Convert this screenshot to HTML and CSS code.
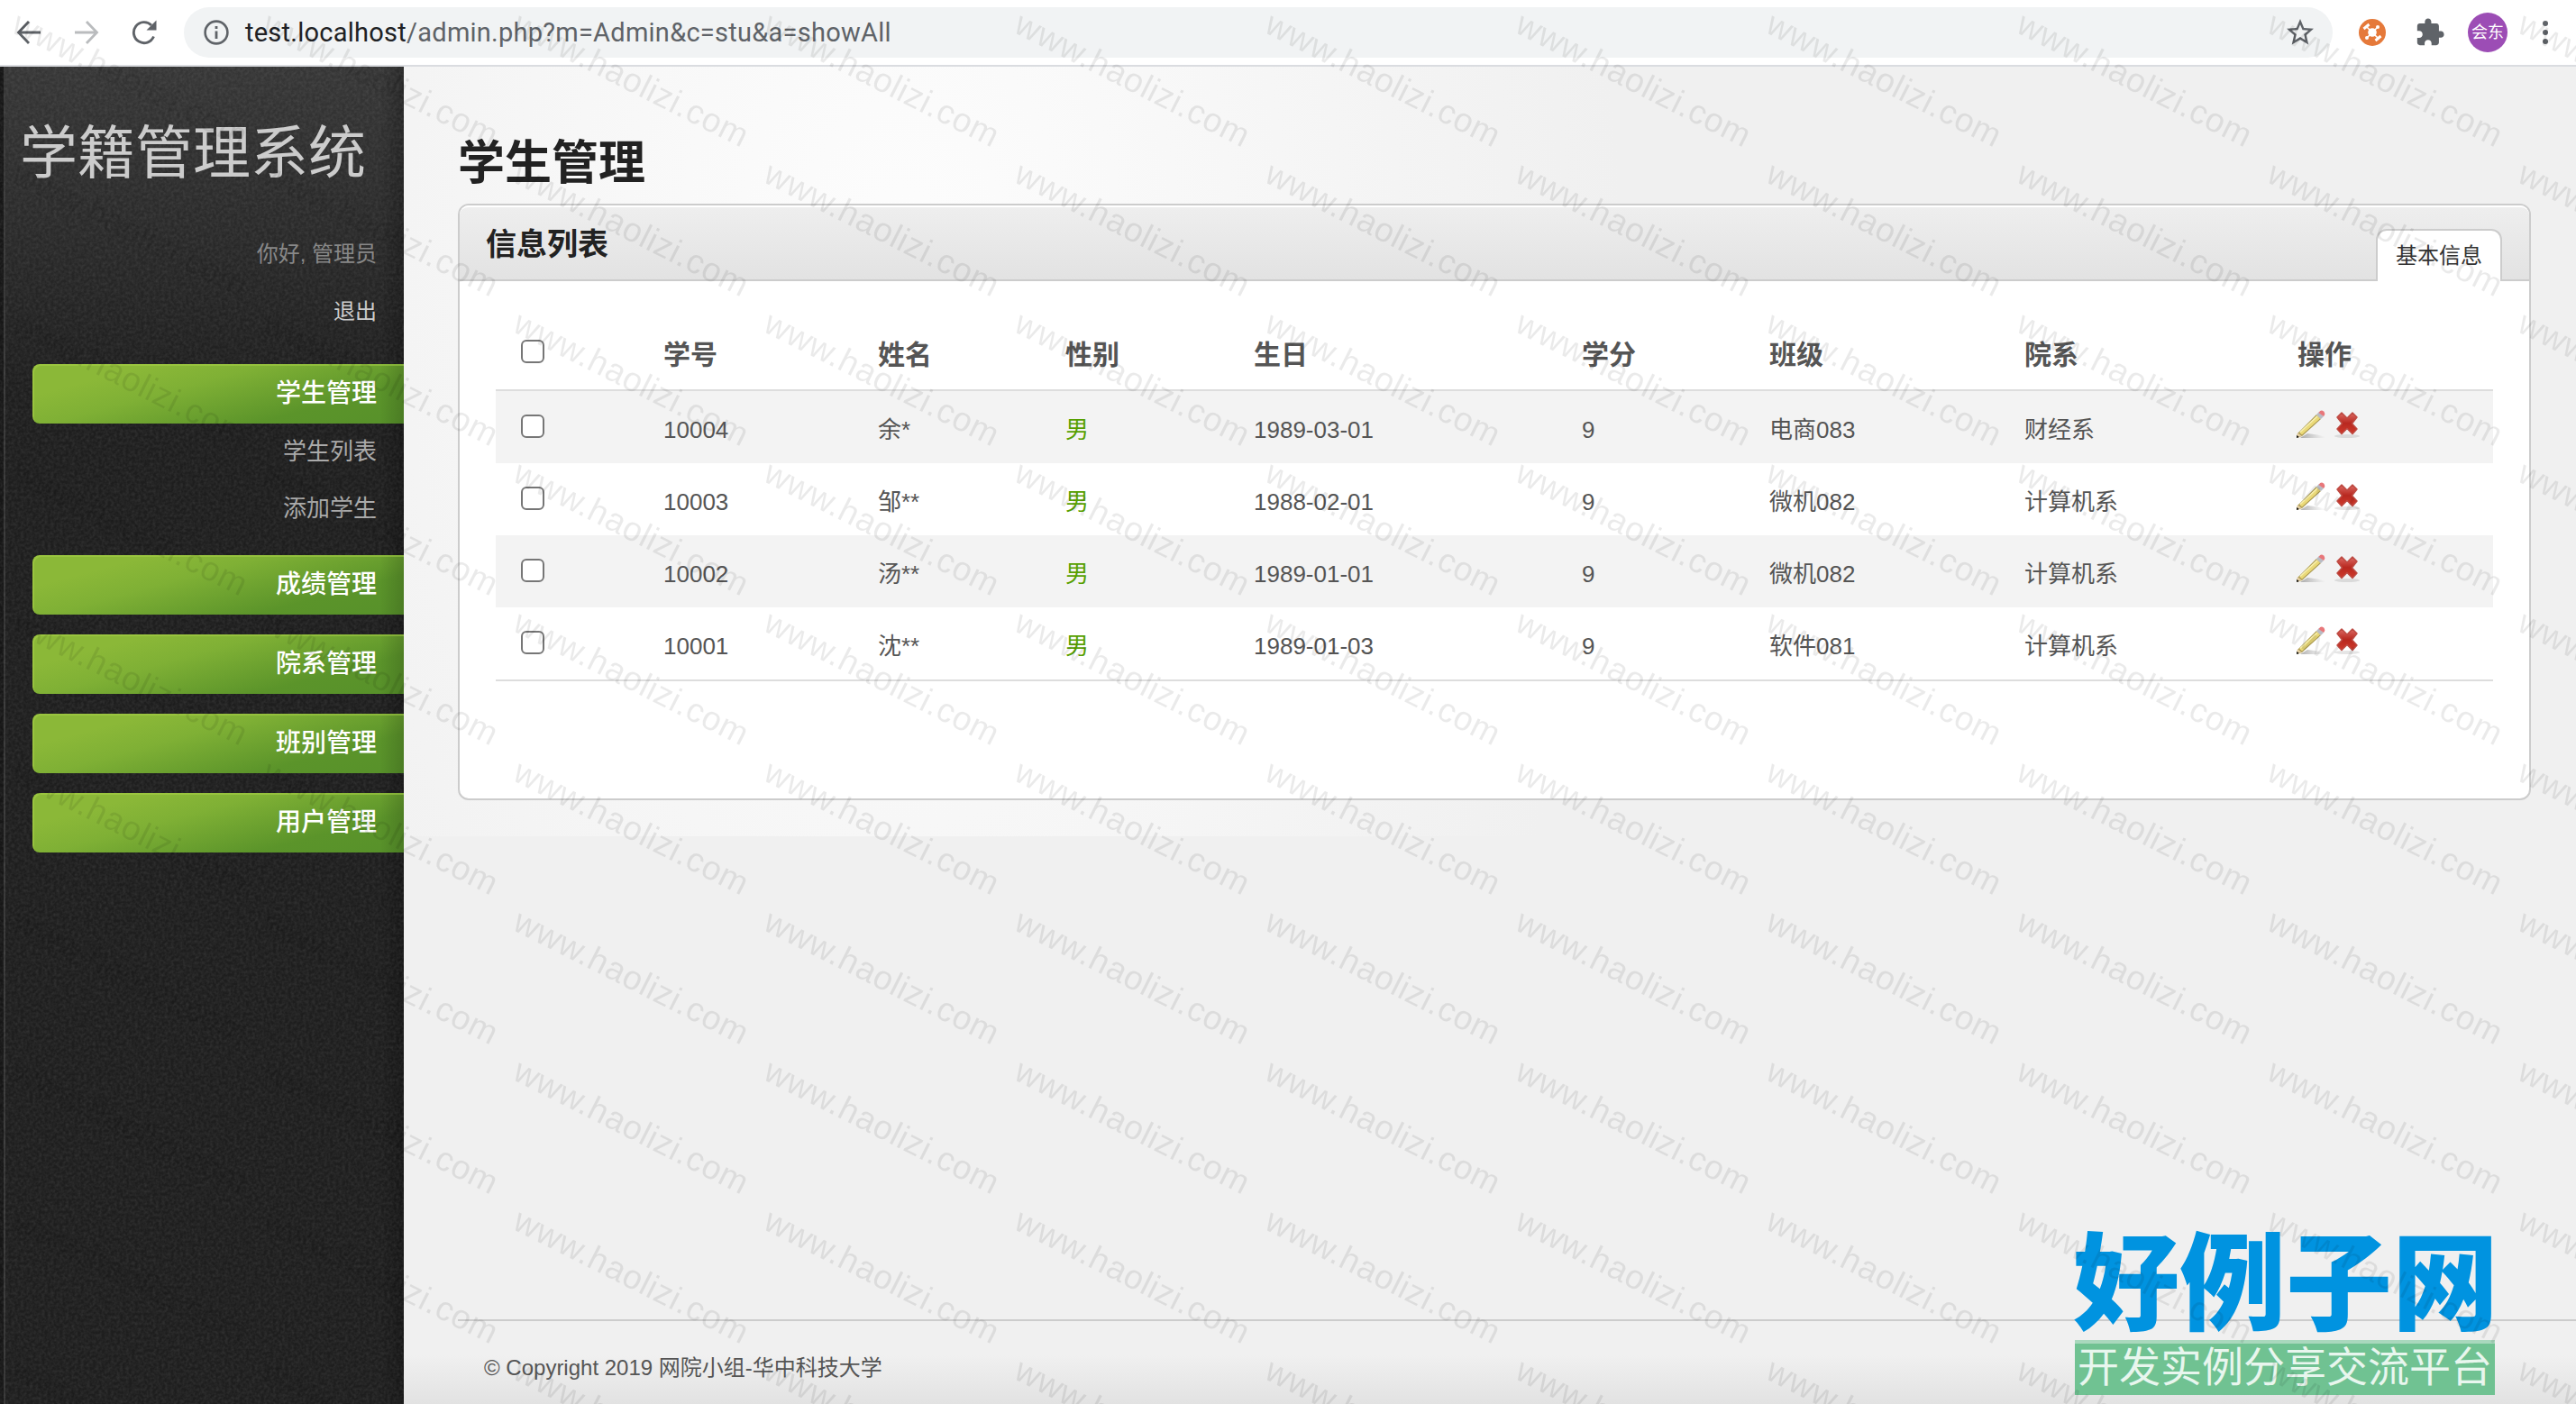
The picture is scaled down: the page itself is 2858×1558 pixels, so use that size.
FILE: index.html
```html
<!DOCTYPE html>
<html lang="zh-CN">
<head>
    <meta charset="UTF-8">
    <title>学籍管理系统</title>
    <link rel="stylesheet" href="styles.css">
</head>
<body>
    <svg class="defs" width="0" height="0">
        <defs>
            <linearGradient id="red" x1="0" y1="0" x2="0" y2="1">
                <stop offset="0" stop-color="#dc6a64"/>
                <stop offset="0.5" stop-color="#b8281f"/>
                <stop offset="1" stop-color="#cf3a2c"/>
            </linearGradient>
            <linearGradient id="lead" x1="0" y1="0" x2="1" y2="0">
                <stop offset="0" stop-color="#777" stop-opacity="0.6"/>
                <stop offset="1" stop-color="#999" stop-opacity="0"/>
            </linearGradient>
        </defs>
        <symbol id="pencil" viewBox="0 0 32 32">
            <path d="M4 32L12 27Q24 28 32 31L32 32Z" fill="url(#lead)"/>
            <path d="M1 27L22 6L27 11L6 30L0 32Z" fill="#a89750"/>
            <path d="M3 26L22.500 7L26 10.500L6 28.500Z" fill="#ead978"/>
            <path d="M4 25.500L23 8" stroke="#f7efb0" stroke-width="1.500"/>
            <path d="M1 26L6 30L0 32Z" fill="#e3cda0"/>
            <path d="M0 29L3 31L0 32Z" fill="#111"/>
            <path d="M22 6L25 3L30 8L27 11Z" fill="#b9bcc4"/>
            <path d="M24.500 4Q27 0 30 2.500Q32.500 5 30 8Z" fill="#e8777a"/>
        </symbol>
        <symbol id="cross" viewBox="0 0 32 32">
            <ellipse cx="16" cy="30" rx="14" ry="2" fill="#000" opacity="0.1"/>
            <path d="M5 9L10 4L16 10L22 4L27 9L21.500 16L27 22L22 27.500L16 21.500L10 27.500L5 22L10.500 16Z" fill="url(#red)" stroke="#bd4a42" stroke-width="1.500" stroke-linejoin="round"/>
        </symbol>
    </svg>

    <div class="toolbar">
        <div class="nav-icons">
            <svg width="28" height="28" viewBox="0 0 28 28" fill="none" stroke="#5f6368" stroke-width="2.800"><path d="M27 14H3M14 2L2.500 14L14 26"/></svg>
            <svg width="28" height="28" viewBox="0 0 28 28" fill="none" stroke="#babcbe" stroke-width="2.800"><path d="M1 14H25M14 2L25.500 14L14 26"/></svg>
            <svg width="28" height="28" viewBox="0 0 28 28"><path d="M24.500 18.500A11.500 11.500 0 1 1 22 6" fill="none" stroke="#5f6368" stroke-width="2.900"/><path d="M27.500 0.500V11.500H16.500Z" fill="#5f6368"/></svg>
        </div>
        <div class="address">
            <svg width="28" height="28" viewBox="0 0 28 28"><circle cx="14" cy="14" r="12.400" fill="none" stroke="#5f6368" stroke-width="2.600"/><path d="M12.600 7H15.400V10H12.600ZM12.600 12.500H15.400V21H12.600Z" fill="#5f6368"/></svg>
            <div class="url">test.localhost<span>/admin.php?m=Admin&amp;c=stu&amp;a=showAll</span></div>
            <svg class="star" width="36" height="36" viewBox="0 0 24 24" fill="#5f6368"><path d="M22 9.240l-7.190-.62L12 2 9.190 8.630 2 9.240l5.460 4.730L5.820 21 12 17.270 18.180 21l-1.630-7.030L22 9.240zM12 15.400l-3.760 2.270 1-4.280-3.320-2.880 4.380-.38L12 6.100l1.710 4.040 4.380.38-3.320 2.880 1 4.280L12 15.400z"/></svg>
        </div>
        <div class="extensions">
            <svg width="30" height="30" viewBox="0 0 30 30"><circle cx="15" cy="15" r="15" fill="#e5793a"/><g stroke="#fff" stroke-width="1.600"><path d="M9 9L21 21M21 9L9 21"/><path d="M5.500 11L11.500 6M18.500 24L24.500 19" stroke-width="3"/></g><circle cx="15" cy="15" r="4.800" fill="#fff"/><circle cx="21" cy="9" r="2" fill="#fff"/><circle cx="9" cy="21" r="2" fill="#fff"/></svg>
            <svg width="34" height="34" viewBox="0 0 24 24" fill="#5f6368"><path d="M20.500 11H19V7c0-1.100-.9-2-2-2h-4V3.500C13 2.120 11.880 1 10.500 1S8 2.120 8 3.500V5H4c-1.100 0-1.990.9-1.990 2v3.800H3.500c1.490 0 2.700 1.210 2.700 2.700s-1.210 2.700-2.700 2.700H2V20c0 1.100.9 2 2 2h3.800v-1.500c0-1.490 1.210-2.700 2.700-2.700 1.490 0 2.700 1.210 2.700 2.700V22H17c1.100 0 2-.9 2-2v-4h1.500c1.380 0 2.500-1.120 2.500-2.500S21.880 11 20.500 11z"/></svg>
            <div class="avatar">会东</div>
            <svg width="6" height="28" viewBox="0 0 6 28" fill="#5f6368"><circle cx="3" cy="4" r="3"/><circle cx="3" cy="14" r="3"/><circle cx="3" cy="24" r="3"/></svg>
        </div>
    </div>

    <div class="wrapper">
        <div class="sidebar">
            <svg class="grain" width="448" height="1484">
                <filter id="noise" x="0" y="0" width="100%" height="100%">
                    <feTurbulence type="fractalNoise" baseFrequency="0.3" numOctaves="2" seed="4"/>
                    <feColorMatrix values="0 0 0 0 1  0 0 0 0 1  0 0 0 0 1  0.140 0 0 0 -0.045"/>
                </filter>
                <rect width="448" height="1484" filter="url(#noise)"/>
            </svg>
            <h1>学籍管理系统</h1>
            <p class="hello">你好, 管理员</p>
            <p class="logout">退出</p>
            <ul class="menu">
                <li>
                    <a class="nav-item">学生管理</a>
                    <ul class="submenu">
                        <li>学生列表</li>
                        <li>添加学生</li>
                    </ul>
                </li>
                <li><a class="nav-item">成绩管理</a></li>
                <li><a class="nav-item">院系管理</a></li>
                <li><a class="nav-item">班别管理</a></li>
                <li><a class="nav-item">用户管理</a></li>
            </ul>
        </div>

        <div class="main">
            <h2>学生管理</h2>
            <div class="content-box">
                <div class="box-header">
                    <h3>信息列表</h3>
                    <div class="tab">基本信息</div>
                </div>
                <div class="box-content">
                    <table>
                        <colgroup>
                            <col class="c-check"><col class="c-id"><col class="c-name"><col class="c-sex"><col class="c-birth"><col class="c-score"><col class="c-class"><col class="c-dept"><col class="c-action">
                        </colgroup>
                        <thead>
                            <tr><th><i class="check"></i></th><th>学号</th><th>姓名</th><th>性别</th><th>生日</th><th>学分</th><th>班级</th><th>院系</th><th>操作</th></tr>
                        </thead>
                        <tbody>
                            <tr><td><i class="check"></i></td><td>10004</td><td>余*</td><td class="sex">男</td><td>1989-03-01</td><td>9</td><td>电商083</td><td>财经系</td><td class="actions"><svg><use href="#pencil"/></svg><svg><use href="#cross"/></svg></td></tr>
                            <tr><td><i class="check"></i></td><td>10003</td><td>邹**</td><td class="sex">男</td><td>1988-02-01</td><td>9</td><td>微机082</td><td>计算机系</td><td class="actions"><svg><use href="#pencil"/></svg><svg><use href="#cross"/></svg></td></tr>
                            <tr><td><i class="check"></i></td><td>10002</td><td>汤**</td><td class="sex">男</td><td>1989-01-01</td><td>9</td><td>微机082</td><td>计算机系</td><td class="actions"><svg><use href="#pencil"/></svg><svg><use href="#cross"/></svg></td></tr>
                            <tr><td><i class="check"></i></td><td>10001</td><td>沈**</td><td class="sex">男</td><td>1989-01-03</td><td>9</td><td>软件081</td><td>计算机系</td><td class="actions"><svg><use href="#pencil"/></svg><svg><use href="#cross"/></svg></td></tr>
                        </tbody>
                    </table>
                </div>
            </div>
            <div class="footer">© Copyright 2019 网院小组-华中科技大学</div>
        </div>
    </div>

    <div class="site-logo">
        <div class="site-name">好例子网</div>
        <div class="site-slogan">开发实例分享交流平台</div>
    </div>

    <svg class="watermark" width="2858" height="1558">
        <defs>
            <pattern id="mark" x="0" y="4" width="278" height="166" patternUnits="userSpaceOnUse">
                <text transform="translate(11 31) rotate(26.800)" textLength="286" font-size="37.500">www.haolizi.com</text>
            </pattern>
        </defs>
        <rect width="2858" height="1558" fill="url(#mark)"/>
    </svg>
</body>
</html>
```

FILE: styles.css
```css
* {
    box-sizing: border-box;
    margin: 0;
    padding: 0;
}
body {
    position: relative;
    width: 2858px;
    height: 1558px;
    overflow: hidden;
    font-family: "Liberation Sans", "Noto Sans CJK SC", sans-serif;
    color: #555;
    background: #f0f0f0;
}
ul {
    list-style: none;
}
svg {
    display: block;
    flex-shrink: 0;
}
.defs {
    position: absolute;
}

/* browser bar */
.toolbar {
    display: flex;
    align-items: center;
    height: 74px;
    background: #fff;
    border-bottom: 2px solid #dadce0;
}
.nav-icons {
    display: flex;
    gap: 36px;
    width: 204px;
    padding-left: 18px;
}
.address {
    display: flex;
    align-items: center;
    width: 2384px;
    height: 56px;
    padding: 0 18px 0 22px;
    border-radius: 28px;
    background: #f1f3f4;
}
.url {
    flex: 1;
    margin-left: 18px;
    font-family: Roboto, sans-serif;
    font-size: 29px;
    letter-spacing: 0.25px;
    color: #202124;
}
.url span {
    color: #5f6368;
}
.extensions {
    display: flex;
    align-items: center;
    padding-left: 29px;
}
.extensions svg:nth-child(2) {
    margin-left: 32px;
}
.avatar {
    width: 44px;
    height: 44px;
    margin: 0 39px 0 25px;
    border-radius: 50%;
    background: #9c4db5;
    color: #fff;
    font-size: 18px;
    line-height: 44px;
    text-align: center;
}

.wrapper {
    display: flex;
    height: 1484px;
}

/* sidebar */
.sidebar {
    position: relative;
    width: 448px;
    text-align: right;
    background: linear-gradient(90deg, #161616 4px, #363636 4px, #363636 6px, transparent 6px, transparent 422px, rgba(0, 0, 0, 0.25)),
    linear-gradient(#363636, #1e1e1e 360px);
}
.sidebar > * {
    position: relative;
}
.sidebar .grain {
    position: absolute;
    top: 0;
    left: 0;
}
.sidebar h1 {
    margin-top: 48px;
    padding-left: 22px;
    font-size: 64px;
    font-weight: 400;
    line-height: 96px;
    text-align: left;
    color: #ccc;
}
.hello, .logout {
    padding-right: 30px;
    font-size: 24px;
    line-height: 40px;
    color: #888;
}
.hello {
    margin-top: 44px;
}
.logout {
    margin-top: 24px;
    color: #ccc;
}
.menu {
    display: flex;
    flex-direction: column;
    gap: 22px;
    margin-top: 38px;
    padding-left: 36px;
}
.nav-item {
    display: block;
    height: 66px;
    padding-right: 30px;
    border-radius: 8px 0 0 8px;
    box-shadow: inset 2px 2px 0 rgba(170, 210, 70, 0.5);
    background: linear-gradient(90deg, transparent 385px, rgba(0, 0, 0, 0.15)),
    linear-gradient(165deg, #8bb838 20%, #7fb035 40%, #5b942a 75%, #57912a);
    font-size: 28px;
    font-weight: 500;
    line-height: 66px;
    color: #fff;
}
.submenu {
    padding: 0 30px 30px 0;
    font-size: 26px;
    line-height: 63px;
    height: 124px;
    color: #aaa;
}

/* page */
.main {
    display: flex;
    flex-direction: column;
    flex: 1;
    padding: 69px 0 0 60px;
    background: linear-gradient(transparent 1430px, #e2e2e2),
    radial-gradient(ellipse 800px 1300px at 552px 240px, #fdfdfd, #f0f0f0) no-repeat 0 0 / 100% 854px;
}
h2 {
    font-size: 52px;
    line-height: 76px;
    color: #222;
}
.content-box {
    width: 2300px;
    height: 662px;
    margin-top: 7px;
    border: 2px solid #ccc;
    border-radius: 12px;
    background: #fff;
}
.box-header {
    display: flex;
    justify-content: space-between;
    align-items: flex-end;
    height: 84px;
    padding: 0 30px 0 29px;
    border-top: 2px solid #fff;
    border-radius: 10px 10px 0 0;
    background: linear-gradient(#eee, #e2e2e2);
    box-shadow: inset 0 -2px 0 #ccc;
}
h3 {
    font-size: 34px;
    line-height: 82px;
    color: #222;
}
.tab {
    width: 140px;
    height: 58px;
    border: 2px solid #ccc;
    border-bottom: none;
    border-radius: 12px 12px 0 0;
    background: #fff;
    font-size: 24px;
    line-height: 56px;
    text-align: center;
    color: #333;
}
.box-content {
    padding: 40px;
}
table {
    width: 2216px;
    table-layout: fixed;
    border-collapse: separate;
    border-spacing: 0;
    border-bottom: 2px solid #ddd;
    font-size: 26px;
}
.c-check { width: 166px; }
.c-id { width: 238px; }
.c-name { width: 208px; }
.c-sex { width: 209px; }
.c-birth { width: 364px; }
.c-score { width: 208px; }
.c-class { width: 283px; }
.c-dept { width: 303px; }
.c-action { width: 237px; }
th, td {
    height: 80px;
    padding: 6px 20px 0;
    line-height: 38px;
    text-align: left;
}
th {
    height: 82px;
    padding-top: 4px;
    padding-bottom: 0;
    border-bottom: 2px solid #ddd;
    font-size: 30px;
}
tbody tr:nth-child(odd) {
    background: #f3f3f3;
}
.check {
    display: block;
    width: 26px;
    height: 26px;
    margin: -8px 0 0 8px;
    border: 2px solid #767676;
    border-radius: 6px;
    background: #fff;
}
.sex {
    color: #57a000;
}
td.actions {
    line-height: 0;
}
.actions svg {
    display: inline-block;
    width: 32px;
    height: 32px;
    margin: -14px 9px 0 -1px;
    vertical-align: middle;
}
.footer {
    margin-top: auto;
    height: 94px;
    padding-left: 29px;
    border-top: 2px solid #ccc;
    font-size: 24px;
    line-height: 104px;
}

/* overlays */
.site-logo {
    position: absolute;
    left: 2300px;
    top: 1362px;
    width: 468px;
}
.site-name {
    height: 125px;
    font-size: 118px;
    font-weight: 900;
    line-height: 128px;
    white-space: nowrap;
    color: #0093e0;
}
.site-slogan {
    height: 61px;
    margin-left: 2px;
    padding-left: 3px;
    border-top: 4px solid #a9d8bd;
    background: #70c292;
    font-size: 46px;
    line-height: 52px;
    white-space: nowrap;
    color: #e8f6ee;
}
.watermark {
    position: absolute;
    left: 0;
    top: 0;
    opacity: 0.08;
}
```
